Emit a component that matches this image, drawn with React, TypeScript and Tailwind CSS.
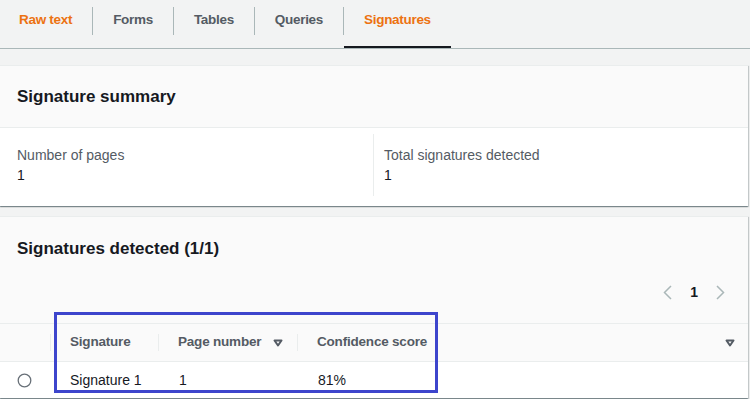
import * as React from "react";

const FONT = { fontFamily: '"Liberation Sans", Arial, sans-serif' };

const tabs = [
  { label: "Raw text", orange: true },
  { label: "Forms" },
  { label: "Tables" },
  { label: "Queries" },
  { label: "Signatures", orange: true, active: true },
];

function SortIcon() {
  return (
    <svg width="10" height="8" viewBox="0 0 10 8" className="shrink-0">
      <path
        d="M1.5 1.5 H8.5 L5 6.5 Z"
        fill="none"
        stroke="#545b64"
        strokeWidth="2"
        strokeLinejoin="round"
      />
    </svg>
  );
}

function Chevron({ dir }: { dir: "left" | "right" }) {
  return (
    <svg width="9" height="15" viewBox="0 0 9 15">
      <path
        d={dir === "left" ? "M8 1 L1.5 7.5 L8 14" : "M1 1 L7.5 7.5 L1 14"}
        fill="none"
        stroke="#aab7b8"
        strokeWidth="1.5"
      />
    </svg>
  );
}

function Tabs() {
  return (
    <div className="flex h-[49px] border-b border-[#aab7b8]">
      {tabs.map((t, i) => (
        <React.Fragment key={t.label}>
          {i > 0 && <div className="mt-[7px] h-[28px] w-px bg-[#aab7b8]" />}
          <div
            className={`relative flex h-[48px] items-start pt-[11px] text-[13.5px] font-bold leading-[18px] tracking-[-0.3px] ${
              i === 0 ? "pl-[19px] pr-[20px]" : "px-[20px]"
            } ${t.orange ? "text-[#ec7211]" : "text-[#545b64]"}`}
          >
            {t.label}
            {t.active && (
              <div className="absolute bottom-0 left-0 right-0 h-[2px] bg-[#16191f]" />
            )}
          </div>
        </React.Fragment>
      ))}
    </div>
  );
}

function SummaryCard() {
  return (
    <div className="mr-[2px] mt-[16px] border-t border-[#eaeded] bg-white shadow-[0_1px_1px_0_rgba(0,28,36,0.3),1px_1px_1px_0_rgba(0,28,36,0.15),-1px_1px_1px_0_rgba(0,28,36,0.15)]">
      <div className="flex h-[62px] items-center border-b border-[#eaeded] bg-[#fafafa] pl-[17px]">
        <span className="text-[17px] font-bold leading-[22px] text-[#16191f]">
          Signature summary
        </span>
      </div>
      <div className="flex pb-[10px] pt-[6px]">
        <div className="h-[62px] w-[373px] pl-[17px] pt-[11px] text-[14px] leading-[20px]">
          <div className="text-[#545b64]">Number of pages</div>
          <div className="text-[#16191f]">1</div>
        </div>
        <div className="h-[62px] flex-1 border-l border-[#eaeded] pl-[10px] pt-[11px] text-[14px] leading-[20px]">
          <div className="text-[#545b64]">Total signatures detected</div>
          <div className="text-[#16191f]">1</div>
        </div>
      </div>
    </div>
  );
}

function HeaderCell({ children, className = "" }: { children: React.ReactNode; className?: string }) {
  return (
    <div className={`flex items-center ${className}`}>
      <div className="h-[17px] w-px bg-[#eaeded]" />
      <div className="flex flex-1 items-center pl-[19px] text-[13.5px] font-bold tracking-[-0.2px] text-[#545b64]">
        {children}
      </div>
    </div>
  );
}

function DetectedCard() {
  return (
    <div className="relative mr-[2px] mt-[10px] border-t border-[#eaeded] bg-[#fafafa] shadow-[0_1px_1px_0_rgba(0,28,36,0.3),1px_1px_1px_0_rgba(0,28,36,0.15),-1px_1px_1px_0_rgba(0,28,36,0.15)]">
      <div className="pl-[17px] pt-[21px] text-[17px] font-bold leading-[22px] text-[#16191f]">
        Signatures detected (1/1)
      </div>
      <div className="flex items-center justify-end gap-[18px] pb-[21px] pr-[23px] pt-[22px]">
        <Chevron dir="left" />
        <span className="text-[14px] font-bold leading-[20px] text-[#16191f]">1</span>
        <Chevron dir="right" />
      </div>
      <div className="flex h-[39px] border-y border-[#eaeded] bg-[#fafafa]">
        <div className="w-[50px]" />
        <HeaderCell className="w-[108px]">Signature</HeaderCell>
        <HeaderCell className="w-[139px]">
          <span>Page number</span>
          <span className="ml-[12px]">
            <SortIcon />
          </span>
        </HeaderCell>
        <HeaderCell className="flex-1">
          <span>Confidence score</span>
          <span className="ml-auto mr-[13px]">
            <SortIcon />
          </span>
        </HeaderCell>
      </div>
      <div className="flex h-[36px] items-center bg-white text-[14px] text-[#16191f]">
        <div className="flex w-[48px] justify-center">
          <svg width="15" height="15" viewBox="0 0 15 15">
            <circle cx="7.5" cy="7.5" r="6.3" fill="white" stroke="#687078" strokeWidth="1.3" />
          </svg>
        </div>
        <div className="w-[110px] pl-[22px]">Signature 1</div>
        <div className="w-[139px] pl-[21px]">1</div>
        <div className="flex-1 pl-[21px]">81%</div>
      </div>
      <div className="pointer-events-none absolute left-[54px] top-[95px] h-[81px] w-[384px] border-[3px] border-[#3d45cc]" />
    </div>
  );
}

export default function App() {
  return (
    <div className="h-[399px] w-full overflow-hidden bg-[#f2f3f3]" style={FONT}>
      <Tabs />
      <SummaryCard />
      <DetectedCard />
    </div>
  );
}
